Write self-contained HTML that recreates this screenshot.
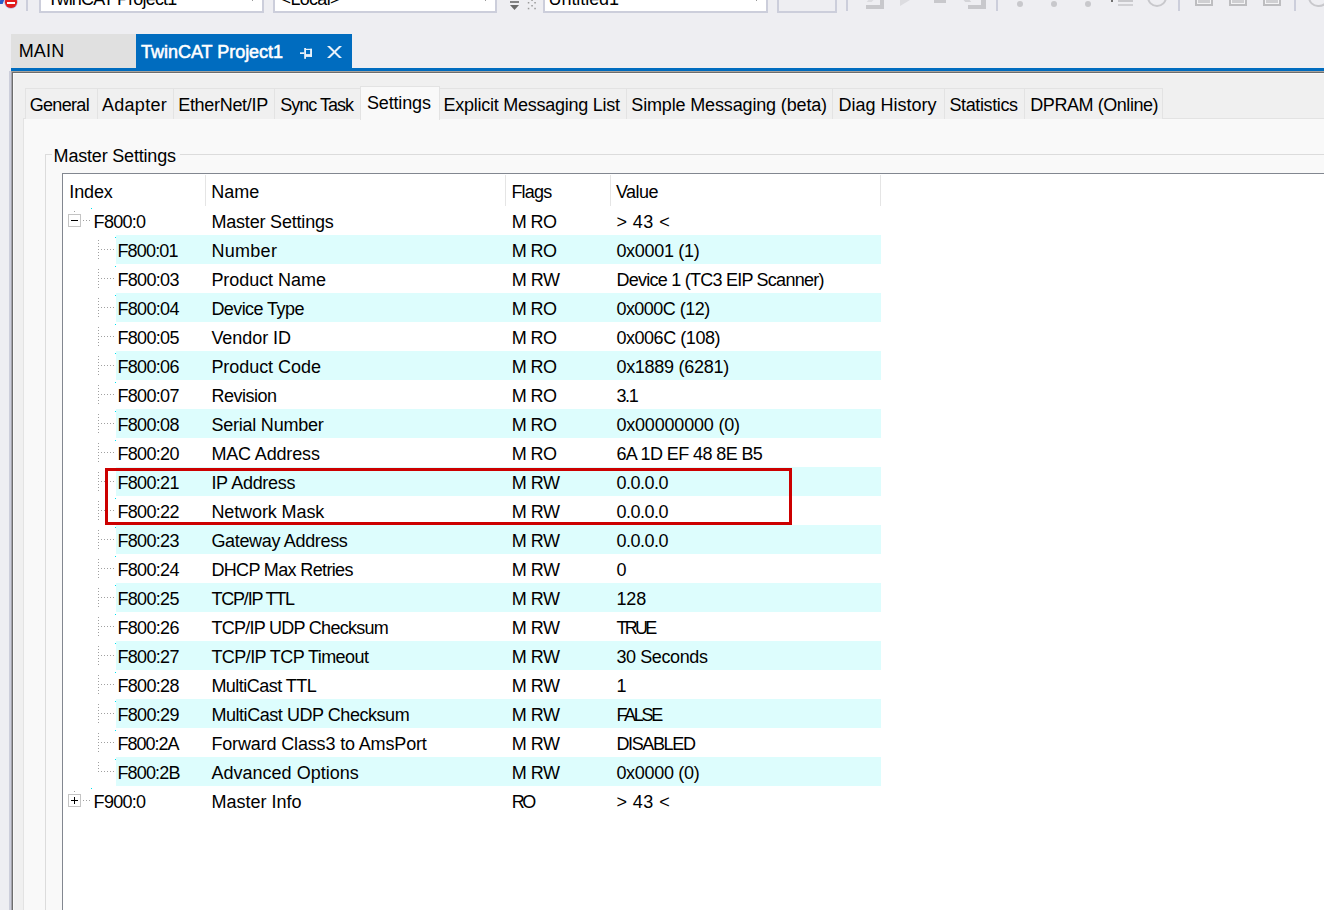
<!DOCTYPE html>
<html><head><meta charset="utf-8">
<style>
*{margin:0;padding:0;box-sizing:border-box}
html,body{width:1324px;height:910px;overflow:hidden;background:#EEEEF2;position:relative;font-family:"Liberation Sans",sans-serif;font-size:18px;color:#000}
.a{position:absolute}
.t{position:absolute;white-space:nowrap;line-height:20px;letter-spacing:-0.4px}
</style></head><body>
<div class="a" style="left:0;top:-3px;width:3.5px;height:7px;background:#2A5CC8;transform:skewX(-20deg)"></div><div class="a" style="left:4.5px;top:-4px;width:12px;height:11.5px;border-radius:50%;background:#E31B1B;box-shadow:0 0 0 0.6px #B0A0D0"></div><div class="a" style="left:6.5px;top:1.6px;width:8px;height:2.4px;background:#fff"></div><div class="a" style="left:26px;top:0;width:2px;height:11px;background:#CCCEDB"></div><div class="a" style="left:846px;top:0;width:2px;height:11px;background:#CCCEDB"></div><div class="a" style="left:996px;top:0;width:2px;height:11px;background:#CCCEDB"></div><div class="a" style="left:1178px;top:0;width:2px;height:11px;background:#CCCEDB"></div><div class="a" style="left:1294px;top:0;width:2px;height:11px;background:#CCCEDB"></div><div class="a" style="left:39px;top:-10px;width:225px;height:23px;background:#fff;border:2px solid #CCCEDB"></div><div class="t" style="left:47.3px;top:-11px;letter-spacing:-0.83px;">TwinCAT Project1</div>
<div class="a" style="left:252px;top:-1px;width:1px;height:2px;background:#9A9A9A"></div><div class="a" style="left:273px;top:-10px;width:224px;height:23px;background:#fff;border:2px solid #CCCEDB"></div><div class="t" style="left:280.6px;top:-11px;letter-spacing:-0.70px;">&lt;Local&gt;</div>
<div class="a" style="left:485px;top:-1px;width:1px;height:2px;background:#9A9A9A"></div><div class="a" style="left:543px;top:-10px;width:225px;height:23px;background:#fff;border:2px solid #CCCEDB"></div><div class="t" style="left:548.5px;top:-11px;letter-spacing:-0.06px;">Untitled1</div>
<div class="a" style="left:756px;top:-1px;width:1px;height:2px;background:#9A9A9A"></div><div class="a" style="left:777px;top:-10px;width:60px;height:23px;border:2px solid #CCCEDB"></div><svg class="a" style="left:505px;top:0" width="36" height="12" viewBox="505 0 36 12"><rect x="510" y="1.2" width="9" height="1.6" fill="#6A6A6A"/><polygon points="510,5.1 519,5.1 514.5,10" fill="#6A6A6A"/><g fill="#9A9A9A"><rect x="531.3" y="-0.5" width="1.5" height="1.5"/><rect x="527.8" y="2" width="1.5" height="1.5"/><rect x="534.3" y="2" width="1.5" height="1.5"/><rect x="531.3" y="5" width="1.5" height="1.5"/><rect x="527.8" y="7.8" width="1.5" height="1.5"/><rect x="534.3" y="7.8" width="1.5" height="1.5"/></g></svg><div class="a" style="left:866px;top:4.8px;width:18px;height:4px;background:#C8C8CC"></div><div class="a" style="left:880px;top:0;width:4px;height:8.8px;background:#C8C8CC"></div><div class="a" style="left:868px;top:-1px;width:5px;height:3px;background:#DCDCE0;transform:skewX(-40deg)"></div><div class="a" style="left:900px;top:0;width:0;height:0;border-top:6px solid #DCDCE0;border-right:10px solid transparent"></div><div class="a" style="left:934px;top:0;width:12px;height:2.7px;background:#C8C8CC"></div><div class="a" style="left:968px;top:4.8px;width:18px;height:4px;background:#C8C8CC"></div><div class="a" style="left:981px;top:0;width:5px;height:8.8px;background:#C8C8CC"></div><div class="a" style="left:964px;top:-1px;width:6px;height:3px;background:#D4D4D8;transform:skewX(40deg)"></div><div class="a" style="left:1017px;top:0.6px;width:6px;height:6px;border-radius:50%;background:#C8C8CC"></div><div class="a" style="left:1051px;top:0.6px;width:6px;height:6px;border-radius:50%;background:#C8C8CC"></div><div class="a" style="left:1085px;top:0.6px;width:6px;height:6px;border-radius:50%;background:#C8C8CC"></div><div class="a" style="left:1111px;top:0;width:2px;height:1.8px;background:#707070"></div><div class="a" style="left:1118.4px;top:0;width:15px;height:1.6px;background:#C8C8CC"></div><div class="a" style="left:1118.4px;top:3.6px;width:15px;height:2.4px;background:#D0D0D4"></div><div class="a" style="left:1146.5px;top:-13.2px;width:20.5px;height:20.5px;border-radius:50%;border:2.2px solid #C8C8CC"></div><div class="a" style="left:1195px;top:-8px;width:18px;height:13.7px;border:2px solid #BDBDC0;background:#CFCFD2;box-shadow:inset 0 0 0 1px #F4F4F6"></div><div class="a" style="left:1229px;top:-8px;width:18px;height:13.7px;border:2px solid #BDBDC0;background:#CFCFD2;box-shadow:inset 0 0 0 1px #F4F4F6"></div><div class="a" style="left:1263px;top:-8px;width:18px;height:13.7px;border:2px solid #BDBDC0;background:#CFCFD2;box-shadow:inset 0 0 0 1px #F4F4F6"></div><div class="a" style="left:1308px;top:-13.2px;width:20.5px;height:20.5px;border-radius:50%;border:2.2px solid #C8C8CC"></div><div class="a" style="left:11px;top:34px;width:125px;height:34px;background:#E0E0E0"></div><div class="t" style="left:18.7px;top:41px;letter-spacing:0.17px;">MAIN</div>
<div class="a" style="left:136px;top:34px;width:216px;height:34px;background:#006CBF"></div><div class="t" style="left:141.0px;top:42px;letter-spacing:-0.02px;color:#fff;-webkit-text-stroke:0.55px #fff">TwinCAT Project1</div>
<svg class="a" style="left:290px;top:40px" width="60" height="24" viewBox="290 40 60 24"><g fill="#EAF2FA"><rect x="300" y="52.3" width="4.3" height="1.7"/><rect x="304.2" y="48" width="1.8" height="10.8"/><rect x="306" y="48.8" width="6" height="1.2"/><rect x="310.1" y="48.8" width="1.9" height="8.1"/><rect x="306" y="54.1" width="6" height="2.8"/><polygon points="327,46 329.9,46 342,58 339.1,58"/><polygon points="339.1,46 342,46 329.9,58 327,58"/></g></svg><div class="a" style="left:11px;top:68px;width:1313px;height:3px;background:#006CBF"></div><div class="a" style="left:9px;top:71px;width:2px;height:839px;background:#CCCEDB"></div><div class="a" style="left:11px;top:72px;width:1px;height:838px;background:#A4A4AC"></div><div class="a" style="left:11px;top:71px;width:1313px;height:1px;background:#A8A49E"></div><div class="a" style="left:12px;top:72px;width:1312px;height:838px;background:#F0F0F0;border-top:1px solid #6D6D6D;border-left:1px solid #6D6D6D"></div><div class="a" style="left:13px;top:73px;width:1311px;height:837px;border-top:1px solid #FAFAFA;border-left:1px solid #F8F8F8"></div><div class="a" style="left:23px;top:118px;width:1301px;height:792px;background:#F9F9F9;border:1px solid #E3E3E3;border-right:none;border-bottom:none"></div><div class="a" style="left:25px;top:88px;width:73px;height:31px;background:#F0F0F0;border:1px solid #E3E3E3;border-bottom:none"></div><div class="t" style="left:29.7px;top:95px;letter-spacing:-0.68px;">General</div>
<div class="a" style="left:97px;top:88px;width:77px;height:31px;background:#F0F0F0;border:1px solid #E3E3E3;border-bottom:none"></div><div class="t" style="left:102.0px;top:95px;letter-spacing:0.28px;">Adapter</div>
<div class="a" style="left:173px;top:88px;width:102px;height:31px;background:#F0F0F0;border:1px solid #E3E3E3;border-bottom:none"></div><div class="t" style="left:178.2px;top:95px;letter-spacing:-0.30px;">EtherNet/IP</div>
<div class="a" style="left:274px;top:88px;width:87px;height:31px;background:#F0F0F0;border:1px solid #E3E3E3;border-bottom:none"></div><div class="t" style="left:280.3px;top:95px;letter-spacing:-0.99px;">Sync Task</div>
<div class="a" style="left:360px;top:86px;width:80px;height:34px;background:#F9F9F9;border:1px solid #E3E3E3;border-bottom:none"></div><div class="t" style="left:366.9px;top:93px;letter-spacing:-0.14px;">Settings</div>
<div class="a" style="left:439px;top:88px;width:188px;height:31px;background:#F0F0F0;border:1px solid #E3E3E3;border-bottom:none"></div><div class="t" style="left:443.5px;top:95px;letter-spacing:-0.25px;">Explicit Messaging List</div>
<div class="a" style="left:626px;top:88px;width:207px;height:31px;background:#F0F0F0;border:1px solid #E3E3E3;border-bottom:none"></div><div class="t" style="left:631.3px;top:95px;letter-spacing:-0.15px;">Simple Messaging (beta)</div>
<div class="a" style="left:832px;top:88px;width:113px;height:31px;background:#F0F0F0;border:1px solid #E3E3E3;border-bottom:none"></div><div class="t" style="left:838.5px;top:95px;letter-spacing:0.00px;">Diag History</div>
<div class="a" style="left:944px;top:88px;width:81px;height:31px;background:#F0F0F0;border:1px solid #E3E3E3;border-bottom:none"></div><div class="t" style="left:949.4px;top:95px;letter-spacing:-0.37px;">Statistics</div>
<div class="a" style="left:1024px;top:88px;width:139px;height:31px;background:#F0F0F0;border:1px solid #E3E3E3;border-bottom:none"></div><div class="t" style="left:1030.3px;top:95px;letter-spacing:-0.44px;">DPRAM (Online)</div>
<div class="a" style="left:45px;top:154px;width:1279px;height:756px;border-top:1px solid #DCDCDC;border-left:1px solid #DCDCDC"></div><div class="a" style="left:52px;top:145px;width:128px;height:20px;background:#F9F9F9"></div><div class="t" style="left:53.6px;top:146px;letter-spacing:-0.19px;">Master Settings</div>
<div class="a" style="left:62px;top:173px;width:1262px;height:737px;background:#fff;border-top:1px solid #828790;border-left:1px solid #828790"></div><div class="a" style="left:205px;top:175px;width:1px;height:31px;background:#E5E5E5"></div><div class="a" style="left:505px;top:175px;width:1px;height:31px;background:#E5E5E5"></div><div class="a" style="left:610px;top:175px;width:1px;height:31px;background:#E5E5E5"></div><div class="a" style="left:880px;top:175px;width:1px;height:31px;background:#E5E5E5"></div><div class="t" style="left:69.3px;top:182px;letter-spacing:-0.12px;">Index</div>
<div class="t" style="left:211.2px;top:182px;letter-spacing:0.00px;">Name</div>
<div class="t" style="left:511.4px;top:182px;letter-spacing:-0.80px;">Flags</div>
<div class="t" style="left:616.0px;top:182px;letter-spacing:-0.57px;">Value</div>
<div class="a" style="left:74px;top:211px;width:1px;height:1px;background:#A0A0A0"></div><div class="a" style="left:91px;top:208px;width:1px;height:1px;background:#00E0F0"></div><div class="a" style="left:68px;top:214px;width:13px;height:13px;border:1px solid #C4C4C4;background:#fff"></div><div class="a" style="left:71px;top:220px;width:7px;height:1px;background:#000"></div><div class="a" style="left:83px;top:220px;width:8px;height:1px;background:repeating-linear-gradient(to right,#A0A0A0 0 1px,transparent 1px 3px)"></div><div class="t" style="left:93.6px;top:212px;letter-spacing:-0.70px;">F800:0</div>
<div class="t" style="left:211.4px;top:212px;letter-spacing:-0.19px;">Master Settings</div>
<div class="t" style="left:511.7px;top:212px;letter-spacing:-0.60px;">M RO</div>
<div class="t" style="left:616.4px;top:212px;letter-spacing:0.44px;">&gt; 43 &lt;</div>
<div class="a" style="left:116px;top:235px;width:765px;height:29px;background:#DDFDFD"></div><div class="a" style="left:98px;top:240px;width:1px;height:19px;background:repeating-linear-gradient(to bottom,#A0A0A0 0 1px,transparent 1px 3px)"></div><div class="a" style="left:101px;top:249px;width:14px;height:1px;background:repeating-linear-gradient(to right,#A0A0A0 0 1px,transparent 1px 3px)"></div><div class="a" style="left:115px;top:237px;width:1px;height:1px;background:#00E0F0"></div><div class="t" style="left:117.4px;top:241px;letter-spacing:-0.82px;">F800:01</div>
<div class="t" style="left:211.4px;top:241px;letter-spacing:0.30px;">Number</div>
<div class="t" style="left:511.7px;top:241px;letter-spacing:-0.60px;">M RO</div>
<div class="t" style="left:616.4px;top:241px;letter-spacing:-0.30px;">0x0001 (1)</div>
<div class="a" style="left:98px;top:269px;width:1px;height:19px;background:repeating-linear-gradient(to bottom,#A0A0A0 0 1px,transparent 1px 3px)"></div><div class="a" style="left:101px;top:278px;width:14px;height:1px;background:repeating-linear-gradient(to right,#A0A0A0 0 1px,transparent 1px 3px)"></div><div class="a" style="left:115px;top:266px;width:1px;height:1px;background:#00E0F0"></div><div class="t" style="left:117.4px;top:270px;letter-spacing:-0.67px;">F800:03</div>
<div class="t" style="left:211.4px;top:270px;letter-spacing:-0.05px;">Product Name</div>
<div class="t" style="left:511.7px;top:270px;letter-spacing:-0.47px;">M RW</div>
<div class="t" style="left:616.4px;top:270px;letter-spacing:-0.75px;">Device 1 (TC3 EIP Scanner)</div>
<div class="a" style="left:116px;top:293px;width:765px;height:29px;background:#DDFDFD"></div><div class="a" style="left:98px;top:298px;width:1px;height:19px;background:repeating-linear-gradient(to bottom,#A0A0A0 0 1px,transparent 1px 3px)"></div><div class="a" style="left:101px;top:307px;width:14px;height:1px;background:repeating-linear-gradient(to right,#A0A0A0 0 1px,transparent 1px 3px)"></div><div class="a" style="left:115px;top:295px;width:1px;height:1px;background:#00E0F0"></div><div class="t" style="left:117.4px;top:299px;letter-spacing:-0.67px;">F800:04</div>
<div class="t" style="left:211.4px;top:299px;letter-spacing:-0.57px;">Device Type</div>
<div class="t" style="left:511.7px;top:299px;letter-spacing:-0.60px;">M RO</div>
<div class="t" style="left:616.4px;top:299px;letter-spacing:-0.52px;">0x000C (12)</div>
<div class="a" style="left:98px;top:327px;width:1px;height:19px;background:repeating-linear-gradient(to bottom,#A0A0A0 0 1px,transparent 1px 3px)"></div><div class="a" style="left:101px;top:336px;width:14px;height:1px;background:repeating-linear-gradient(to right,#A0A0A0 0 1px,transparent 1px 3px)"></div><div class="a" style="left:115px;top:324px;width:1px;height:1px;background:#00E0F0"></div><div class="t" style="left:117.4px;top:328px;letter-spacing:-0.67px;">F800:05</div>
<div class="t" style="left:211.4px;top:328px;letter-spacing:-0.06px;">Vendor ID</div>
<div class="t" style="left:511.7px;top:328px;letter-spacing:-0.60px;">M RO</div>
<div class="t" style="left:616.4px;top:328px;letter-spacing:-0.45px;">0x006C (108)</div>
<div class="a" style="left:116px;top:351px;width:765px;height:29px;background:#DDFDFD"></div><div class="a" style="left:98px;top:356px;width:1px;height:19px;background:repeating-linear-gradient(to bottom,#A0A0A0 0 1px,transparent 1px 3px)"></div><div class="a" style="left:101px;top:365px;width:14px;height:1px;background:repeating-linear-gradient(to right,#A0A0A0 0 1px,transparent 1px 3px)"></div><div class="a" style="left:115px;top:353px;width:1px;height:1px;background:#00E0F0"></div><div class="t" style="left:117.4px;top:357px;letter-spacing:-0.67px;">F800:06</div>
<div class="t" style="left:211.4px;top:357px;letter-spacing:-0.05px;">Product Code</div>
<div class="t" style="left:511.7px;top:357px;letter-spacing:-0.60px;">M RO</div>
<div class="t" style="left:616.4px;top:357px;letter-spacing:-0.27px;">0x1889 (6281)</div>
<div class="a" style="left:98px;top:385px;width:1px;height:19px;background:repeating-linear-gradient(to bottom,#A0A0A0 0 1px,transparent 1px 3px)"></div><div class="a" style="left:101px;top:394px;width:14px;height:1px;background:repeating-linear-gradient(to right,#A0A0A0 0 1px,transparent 1px 3px)"></div><div class="a" style="left:115px;top:382px;width:1px;height:1px;background:#00E0F0"></div><div class="t" style="left:117.4px;top:386px;letter-spacing:-0.67px;">F800:07</div>
<div class="t" style="left:211.4px;top:386px;letter-spacing:-0.50px;">Revision</div>
<div class="t" style="left:511.7px;top:386px;letter-spacing:-0.60px;">M RO</div>
<div class="t" style="left:616.4px;top:386px;letter-spacing:-1.30px;">3.1</div>
<div class="a" style="left:116px;top:409px;width:765px;height:29px;background:#DDFDFD"></div><div class="a" style="left:98px;top:414px;width:1px;height:19px;background:repeating-linear-gradient(to bottom,#A0A0A0 0 1px,transparent 1px 3px)"></div><div class="a" style="left:101px;top:423px;width:14px;height:1px;background:repeating-linear-gradient(to right,#A0A0A0 0 1px,transparent 1px 3px)"></div><div class="a" style="left:115px;top:411px;width:1px;height:1px;background:#00E0F0"></div><div class="t" style="left:117.4px;top:415px;letter-spacing:-0.67px;">F800:08</div>
<div class="t" style="left:211.4px;top:415px;letter-spacing:-0.22px;">Serial Number</div>
<div class="t" style="left:511.7px;top:415px;letter-spacing:-0.60px;">M RO</div>
<div class="t" style="left:616.4px;top:415px;letter-spacing:-0.19px;">0x00000000 (0)</div>
<div class="a" style="left:98px;top:443px;width:1px;height:19px;background:repeating-linear-gradient(to bottom,#A0A0A0 0 1px,transparent 1px 3px)"></div><div class="a" style="left:101px;top:452px;width:14px;height:1px;background:repeating-linear-gradient(to right,#A0A0A0 0 1px,transparent 1px 3px)"></div><div class="a" style="left:115px;top:440px;width:1px;height:1px;background:#00E0F0"></div><div class="t" style="left:117.4px;top:444px;letter-spacing:-0.67px;">F800:20</div>
<div class="t" style="left:211.4px;top:444px;letter-spacing:-0.15px;">MAC Address</div>
<div class="t" style="left:511.7px;top:444px;letter-spacing:-0.60px;">M RO</div>
<div class="t" style="left:616.4px;top:444px;letter-spacing:-0.60px;">6A 1D EF 48 8E B5</div>
<div class="a" style="left:116px;top:467px;width:765px;height:29px;background:#DDFDFD"></div><div class="a" style="left:98px;top:472px;width:1px;height:19px;background:repeating-linear-gradient(to bottom,#A0A0A0 0 1px,transparent 1px 3px)"></div><div class="a" style="left:101px;top:481px;width:14px;height:1px;background:repeating-linear-gradient(to right,#A0A0A0 0 1px,transparent 1px 3px)"></div><div class="a" style="left:115px;top:469px;width:1px;height:1px;background:#00E0F0"></div><div class="t" style="left:117.4px;top:473px;letter-spacing:-0.67px;">F800:21</div>
<div class="t" style="left:211.4px;top:473px;letter-spacing:-0.29px;">IP Address</div>
<div class="t" style="left:511.7px;top:473px;letter-spacing:-0.47px;">M RW</div>
<div class="t" style="left:616.4px;top:473px;letter-spacing:-0.48px;">0.0.0.0</div>
<div class="a" style="left:98px;top:501px;width:1px;height:19px;background:repeating-linear-gradient(to bottom,#A0A0A0 0 1px,transparent 1px 3px)"></div><div class="a" style="left:101px;top:510px;width:14px;height:1px;background:repeating-linear-gradient(to right,#A0A0A0 0 1px,transparent 1px 3px)"></div><div class="a" style="left:115px;top:498px;width:1px;height:1px;background:#00E0F0"></div><div class="t" style="left:117.4px;top:502px;letter-spacing:-0.67px;">F800:22</div>
<div class="t" style="left:211.4px;top:502px;letter-spacing:-0.10px;">Network Mask</div>
<div class="t" style="left:511.7px;top:502px;letter-spacing:-0.47px;">M RW</div>
<div class="t" style="left:616.4px;top:502px;letter-spacing:-0.48px;">0.0.0.0</div>
<div class="a" style="left:116px;top:525px;width:765px;height:29px;background:#DDFDFD"></div><div class="a" style="left:98px;top:530px;width:1px;height:19px;background:repeating-linear-gradient(to bottom,#A0A0A0 0 1px,transparent 1px 3px)"></div><div class="a" style="left:101px;top:539px;width:14px;height:1px;background:repeating-linear-gradient(to right,#A0A0A0 0 1px,transparent 1px 3px)"></div><div class="a" style="left:115px;top:527px;width:1px;height:1px;background:#00E0F0"></div><div class="t" style="left:117.4px;top:531px;letter-spacing:-0.67px;">F800:23</div>
<div class="t" style="left:211.4px;top:531px;letter-spacing:-0.33px;">Gateway Address</div>
<div class="t" style="left:511.7px;top:531px;letter-spacing:-0.47px;">M RW</div>
<div class="t" style="left:616.4px;top:531px;letter-spacing:-0.48px;">0.0.0.0</div>
<div class="a" style="left:98px;top:559px;width:1px;height:19px;background:repeating-linear-gradient(to bottom,#A0A0A0 0 1px,transparent 1px 3px)"></div><div class="a" style="left:101px;top:568px;width:14px;height:1px;background:repeating-linear-gradient(to right,#A0A0A0 0 1px,transparent 1px 3px)"></div><div class="a" style="left:115px;top:556px;width:1px;height:1px;background:#00E0F0"></div><div class="t" style="left:117.4px;top:560px;letter-spacing:-0.67px;">F800:24</div>
<div class="t" style="left:211.4px;top:560px;letter-spacing:-0.64px;">DHCP Max Retries</div>
<div class="t" style="left:511.7px;top:560px;letter-spacing:-0.47px;">M RW</div>
<div class="t" style="left:616.4px;top:560px;letter-spacing:0.00px;">0</div>
<div class="a" style="left:116px;top:583px;width:765px;height:29px;background:#DDFDFD"></div><div class="a" style="left:98px;top:588px;width:1px;height:19px;background:repeating-linear-gradient(to bottom,#A0A0A0 0 1px,transparent 1px 3px)"></div><div class="a" style="left:101px;top:597px;width:14px;height:1px;background:repeating-linear-gradient(to right,#A0A0A0 0 1px,transparent 1px 3px)"></div><div class="a" style="left:115px;top:585px;width:1px;height:1px;background:#00E0F0"></div><div class="t" style="left:117.4px;top:589px;letter-spacing:-0.67px;">F800:25</div>
<div class="t" style="left:211.4px;top:589px;letter-spacing:-1.19px;">TCP/IP TTL</div>
<div class="t" style="left:511.7px;top:589px;letter-spacing:-0.47px;">M RW</div>
<div class="t" style="left:616.4px;top:589px;letter-spacing:-0.10px;">128</div>
<div class="a" style="left:98px;top:617px;width:1px;height:19px;background:repeating-linear-gradient(to bottom,#A0A0A0 0 1px,transparent 1px 3px)"></div><div class="a" style="left:101px;top:626px;width:14px;height:1px;background:repeating-linear-gradient(to right,#A0A0A0 0 1px,transparent 1px 3px)"></div><div class="a" style="left:115px;top:614px;width:1px;height:1px;background:#00E0F0"></div><div class="t" style="left:117.4px;top:618px;letter-spacing:-0.67px;">F800:26</div>
<div class="t" style="left:211.4px;top:618px;letter-spacing:-0.72px;">TCP/IP UDP Checksum</div>
<div class="t" style="left:511.7px;top:618px;letter-spacing:-0.47px;">M RW</div>
<div class="t" style="left:616.4px;top:618px;letter-spacing:-2.70px;">TRUE</div>
<div class="a" style="left:116px;top:641px;width:765px;height:29px;background:#DDFDFD"></div><div class="a" style="left:98px;top:646px;width:1px;height:19px;background:repeating-linear-gradient(to bottom,#A0A0A0 0 1px,transparent 1px 3px)"></div><div class="a" style="left:101px;top:655px;width:14px;height:1px;background:repeating-linear-gradient(to right,#A0A0A0 0 1px,transparent 1px 3px)"></div><div class="a" style="left:115px;top:643px;width:1px;height:1px;background:#00E0F0"></div><div class="t" style="left:117.4px;top:647px;letter-spacing:-0.67px;">F800:27</div>
<div class="t" style="left:211.4px;top:647px;letter-spacing:-0.56px;">TCP/IP TCP Timeout</div>
<div class="t" style="left:511.7px;top:647px;letter-spacing:-0.47px;">M RW</div>
<div class="t" style="left:616.4px;top:647px;letter-spacing:-0.39px;">30 Seconds</div>
<div class="a" style="left:98px;top:675px;width:1px;height:19px;background:repeating-linear-gradient(to bottom,#A0A0A0 0 1px,transparent 1px 3px)"></div><div class="a" style="left:101px;top:684px;width:14px;height:1px;background:repeating-linear-gradient(to right,#A0A0A0 0 1px,transparent 1px 3px)"></div><div class="a" style="left:115px;top:672px;width:1px;height:1px;background:#00E0F0"></div><div class="t" style="left:117.4px;top:676px;letter-spacing:-0.67px;">F800:28</div>
<div class="t" style="left:211.4px;top:676px;letter-spacing:-0.53px;">MultiCast TTL</div>
<div class="t" style="left:511.7px;top:676px;letter-spacing:-0.47px;">M RW</div>
<div class="t" style="left:616.4px;top:676px;letter-spacing:0.00px;">1</div>
<div class="a" style="left:116px;top:699px;width:765px;height:29px;background:#DDFDFD"></div><div class="a" style="left:98px;top:704px;width:1px;height:19px;background:repeating-linear-gradient(to bottom,#A0A0A0 0 1px,transparent 1px 3px)"></div><div class="a" style="left:101px;top:713px;width:14px;height:1px;background:repeating-linear-gradient(to right,#A0A0A0 0 1px,transparent 1px 3px)"></div><div class="a" style="left:115px;top:701px;width:1px;height:1px;background:#00E0F0"></div><div class="t" style="left:117.4px;top:705px;letter-spacing:-0.67px;">F800:29</div>
<div class="t" style="left:211.4px;top:705px;letter-spacing:-0.45px;">MultiCast UDP Checksum</div>
<div class="t" style="left:511.7px;top:705px;letter-spacing:-0.47px;">M RW</div>
<div class="t" style="left:616.4px;top:705px;letter-spacing:-2.28px;">FALSE</div>
<div class="a" style="left:98px;top:733px;width:1px;height:19px;background:repeating-linear-gradient(to bottom,#A0A0A0 0 1px,transparent 1px 3px)"></div><div class="a" style="left:101px;top:742px;width:14px;height:1px;background:repeating-linear-gradient(to right,#A0A0A0 0 1px,transparent 1px 3px)"></div><div class="a" style="left:115px;top:730px;width:1px;height:1px;background:#00E0F0"></div><div class="t" style="left:117.4px;top:734px;letter-spacing:-1.00px;">F800:2A</div>
<div class="t" style="left:211.4px;top:734px;letter-spacing:-0.15px;">Forward Class3 to AmsPort</div>
<div class="t" style="left:511.7px;top:734px;letter-spacing:-0.47px;">M RW</div>
<div class="t" style="left:616.4px;top:734px;letter-spacing:-1.36px;">DISABLED</div>
<div class="a" style="left:116px;top:757px;width:765px;height:29px;background:#DDFDFD"></div><div class="a" style="left:98px;top:762px;width:1px;height:10px;background:repeating-linear-gradient(to bottom,#A0A0A0 0 1px,transparent 1px 3px)"></div><div class="a" style="left:101px;top:771px;width:14px;height:1px;background:repeating-linear-gradient(to right,#A0A0A0 0 1px,transparent 1px 3px)"></div><div class="a" style="left:115px;top:759px;width:1px;height:1px;background:#00E0F0"></div><div class="t" style="left:117.4px;top:763px;letter-spacing:-0.83px;">F800:2B</div>
<div class="t" style="left:211.4px;top:763px;letter-spacing:0.02px;">Advanced Options</div>
<div class="t" style="left:511.7px;top:763px;letter-spacing:-0.47px;">M RW</div>
<div class="t" style="left:616.4px;top:763px;letter-spacing:-0.30px;">0x0000 (0)</div>
<div class="a" style="left:74px;top:791px;width:1px;height:1px;background:#A0A0A0"></div><div class="a" style="left:91px;top:788px;width:1px;height:1px;background:#00E0F0"></div><div class="a" style="left:68px;top:794px;width:13px;height:13px;border:1px solid #C4C4C4;background:#fff"></div><div class="a" style="left:71px;top:800px;width:7px;height:1px;background:#000"></div><div class="a" style="left:74px;top:797px;width:1px;height:7px;background:#000"></div><div class="a" style="left:83px;top:800px;width:8px;height:1px;background:repeating-linear-gradient(to right,#A0A0A0 0 1px,transparent 1px 3px)"></div><div class="t" style="left:93.6px;top:792px;letter-spacing:-0.70px;">F900:0</div>
<div class="t" style="left:211.4px;top:792px;letter-spacing:0.00px;">Master Info</div>
<div class="t" style="left:511.7px;top:792px;letter-spacing:-2.50px;">RO</div>
<div class="t" style="left:616.4px;top:792px;letter-spacing:0.44px;">&gt; 43 &lt;</div>
<div class="a" style="left:105px;top:468px;width:687px;height:57px;border:3px solid #CC0000"></div></body></html>
